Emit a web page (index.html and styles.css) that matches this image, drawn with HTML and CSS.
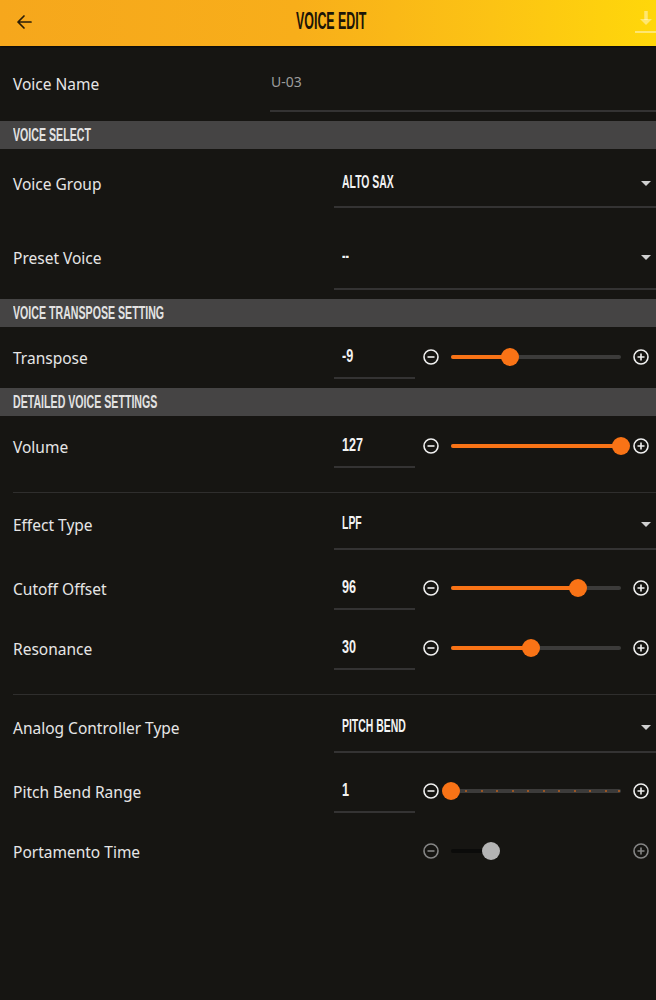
FILE: index.html
```html
<!DOCTYPE html>
<html>
<head>
<meta charset="utf-8">
<link rel="stylesheet" href="styles.css">
</head>
<body>
<header class="appbar">
  <div class="back">
    <svg width="16" height="16" viewBox="0 0 16 16"><path d="M15 8H2M8 2L2 8l6 6" fill="none" stroke="#2a1e08" stroke-width="1.7" stroke-linecap="round" stroke-linejoin="round"/></svg>
  </div>
  <h1 class="title"><span class="cond">VOICE EDIT</span></h1>
  <div class="dl">
    <svg width="22" height="23" viewBox="0 0 22 23"><path d="M11 0v9" stroke="rgba(255,255,255,0.42)" stroke-width="3.5"/><path d="M5 8h12l-6 6z" fill="rgba(255,255,255,0.42)"/><path d="M0 21h22" stroke="rgba(255,255,255,0.42)" stroke-width="2"/></svg>
  </div>
</header>

<main>
  <div class="row row-name">
    <div class="label">Voice Name</div>
    <div class="field field-name">U-03</div>
  </div>

  <div class="section"><span class="cond">VOICE SELECT</span></div>

  <div class="row row-vg">
    <div class="label">Voice Group</div>
    <div class="field field-select"><span class="cond">ALTO SAX</span><span class="caret"></span></div>
  </div>
  <div class="row row-pv">
    <div class="label">Preset Voice</div>
    <div class="field field-select"><span class="cond">--</span><span class="caret"></span></div>
  </div>

  <div class="section"><span class="cond">VOICE TRANSPOSE SETTING</span></div>

  <div class="row row-slider">
    <div class="label">Transpose</div>
    <div class="field field-num"><span class="cond num">-9</span></div>
    <div class="slider">
      <svg class="pm" width="16" height="16" viewBox="0 0 16 16"><circle cx="8" cy="8" r="7" fill="none" stroke="currentColor" stroke-width="1.6"/><path d="M4.5 8h7" stroke="currentColor" stroke-width="1.6"/></svg>
      <div class="track"><div class="fill" style="width:34.7%"></div><div class="thumb" style="left:34.7%"></div></div>
      <svg class="pm" width="16" height="16" viewBox="0 0 16 16"><circle cx="8" cy="8" r="7" fill="none" stroke="currentColor" stroke-width="1.6"/><path d="M4.5 8h7M8 4.5v7" stroke="currentColor" stroke-width="1.6"/></svg>
    </div>
  </div>

  <div class="section"><span class="cond">DETAILED VOICE SETTINGS</span></div>

  <div class="row row-slider">
    <div class="label">Volume</div>
    <div class="field field-num"><span class="cond num">127</span></div>
    <div class="slider">
      <svg class="pm" width="16" height="16" viewBox="0 0 16 16"><circle cx="8" cy="8" r="7" fill="none" stroke="currentColor" stroke-width="1.6"/><path d="M4.5 8h7" stroke="currentColor" stroke-width="1.6"/></svg>
      <div class="track"><div class="fill" style="width:100%"></div><div class="thumb" style="left:100%"></div></div>
      <svg class="pm" width="16" height="16" viewBox="0 0 16 16"><circle cx="8" cy="8" r="7" fill="none" stroke="currentColor" stroke-width="1.6"/><path d="M4.5 8h7M8 4.5v7" stroke="currentColor" stroke-width="1.6"/></svg>
    </div>
  </div>

  <div class="divider"></div>

  <div class="row row-select row-effect">
    <div class="label">Effect Type</div>
    <div class="field field-select"><span class="cond">LPF</span><span class="caret"></span></div>
  </div>
  <div class="row row-slider row-tight">
    <div class="label">Cutoff Offset</div>
    <div class="field field-num"><span class="cond num">96</span></div>
    <div class="slider">
      <svg class="pm" width="16" height="16" viewBox="0 0 16 16"><circle cx="8" cy="8" r="7" fill="none" stroke="currentColor" stroke-width="1.6"/><path d="M4.5 8h7" stroke="currentColor" stroke-width="1.6"/></svg>
      <div class="track"><div class="fill" style="width:74.7%"></div><div class="thumb" style="left:74.7%"></div></div>
      <svg class="pm" width="16" height="16" viewBox="0 0 16 16"><circle cx="8" cy="8" r="7" fill="none" stroke="currentColor" stroke-width="1.6"/><path d="M4.5 8h7M8 4.5v7" stroke="currentColor" stroke-width="1.6"/></svg>
    </div>
  </div>
  <div class="row row-slider">
    <div class="label">Resonance</div>
    <div class="field field-num"><span class="cond num">30</span></div>
    <div class="slider">
      <svg class="pm" width="16" height="16" viewBox="0 0 16 16"><circle cx="8" cy="8" r="7" fill="none" stroke="currentColor" stroke-width="1.6"/><path d="M4.5 8h7" stroke="currentColor" stroke-width="1.6"/></svg>
      <div class="track"><div class="fill" style="width:47%"></div><div class="thumb" style="left:47%"></div></div>
      <svg class="pm" width="16" height="16" viewBox="0 0 16 16"><circle cx="8" cy="8" r="7" fill="none" stroke="currentColor" stroke-width="1.6"/><path d="M4.5 8h7M8 4.5v7" stroke="currentColor" stroke-width="1.6"/></svg>
    </div>
  </div>

  <div class="divider"></div>

  <div class="row row-select row-analog">
    <div class="label">Analog Controller Type</div>
    <div class="field field-select"><span class="cond">PITCH BEND</span><span class="caret"></span></div>
  </div>
  <div class="row row-slider row-tight">
    <div class="label">Pitch Bend Range</div>
    <div class="field field-num"><span class="cond num">1</span></div>
    <div class="slider">
      <svg class="pm" width="16" height="16" viewBox="0 0 16 16"><circle cx="8" cy="8" r="7" fill="none" stroke="currentColor" stroke-width="1.6"/><path d="M4.5 8h7" stroke="currentColor" stroke-width="1.6"/></svg>
      <div class="track">
        <span class="tick" style="left:9.09%"></span><span class="tick" style="left:18.18%"></span><span class="tick" style="left:27.27%"></span><span class="tick" style="left:36.36%"></span><span class="tick" style="left:45.45%"></span><span class="tick" style="left:54.55%"></span><span class="tick" style="left:63.64%"></span><span class="tick" style="left:72.73%"></span><span class="tick" style="left:81.82%"></span><span class="tick" style="left:90.91%"></span><span class="tick" style="left:99%"></span>
        <div class="thumb" style="left:0%"></div>
      </div>
      <svg class="pm" width="16" height="16" viewBox="0 0 16 16"><circle cx="8" cy="8" r="7" fill="none" stroke="currentColor" stroke-width="1.6"/><path d="M4.5 8h7M8 4.5v7" stroke="currentColor" stroke-width="1.6"/></svg>
    </div>
  </div>
  <div class="row row-slider">
    <div class="label">Portamento Time</div>
    <div class="field field-empty"></div>
    <div class="slider disabled">
      <svg class="pm" width="16" height="16" viewBox="0 0 16 16"><circle cx="8" cy="8" r="7" fill="none" stroke="currentColor" stroke-width="1.6"/><path d="M4.5 8h7" stroke="currentColor" stroke-width="1.6"/></svg>
      <div class="track"><div class="fill" style="width:23.5%"></div><div class="thumb" style="left:23.5%"></div></div>
      <svg class="pm" width="16" height="16" viewBox="0 0 16 16"><circle cx="8" cy="8" r="7" fill="none" stroke="currentColor" stroke-width="1.6"/><path d="M4.5 8h7M8 4.5v7" stroke="currentColor" stroke-width="1.6"/></svg>
    </div>
  </div>
</main>
</body>
</html>
```

FILE: styles.css
```css
* { box-sizing: content-box; }
html, body { margin: 0; padding: 0; }
body {
  width: 656px;
  min-height: 1000px;
  background: #161512;
  color: #e4e4e4;
  font-family: "Noto Sans", "Liberation Sans", sans-serif;
  overflow-x: hidden;
}

.appbar {
  height: 46px;
  display: flex;
  align-items: center;
  position: relative;
  background: linear-gradient(90deg, #f6a71c 0%, #f8ae1a 45%, #fcc314 75%, #ffd70a 100%);
  box-shadow: 0 1px 2px rgba(0,0,0,0.6);
}
.back {
  width: 16px;
  height: 16px;
  margin-left: 16px;
  margin-top: -3px;
}
.back svg { display: block; }
.title {
  flex: 1;
  margin: 0;
  text-align: center;
  font-size: 23px;
  line-height: 28px;
  color: #1c1507;
  margin-top: -5px;
  margin-right: 4px;
}
.title .cond {
  transform: scaleX(0.54);
  transform-origin: center center;
  font-size: 23px;
}
.dl {
  width: 22px;
  height: 23px;
  margin-right: -1px;
  margin-top: -2px;
}
.dl svg { display: block; }

.cond {
  display: inline-block;
  font-family: "Liberation Sans", Arial, sans-serif;
  font-weight: bold;
  font-size: 18px;
  white-space: nowrap;
  transform: scaleX(0.58);
  transform-origin: left center;
}
.cond.num { transform: scaleX(0.7); }

.section {
  height: 28px;
  background: #454444;
  padding-left: 13px;
  display: flex;
  align-items: center;
  color: #e2e2e2;
}
.section .cond { transform: scaleX(0.59); line-height: 20px; }

.row {
  display: flex;
  align-items: flex-start;
  padding-left: 13px;
}
.label {
  flex: none;
  width: 321px;
  font-size: 15.5px;
  line-height: 22px;
  color: #e6e6e6;
}
.field {
  flex: 1;
  min-width: 0;
  padding-left: 8px;
  line-height: 22px;
  height: 22px;
  border-bottom: 2px solid #343333;
  color: #f2f2f2;
  display: flex;
  align-items: center;
  justify-content: space-between;
}
.field .cond { line-height: 22px; }

.caret {
  width: 0;
  height: 0;
  border-left: 5px solid transparent;
  border-right: 5px solid transparent;
  border-top: 5px solid #cfcfcf;
  margin-right: 5px;
  margin-top: 2px;
}

/* Voice Name */
.row-name { height: 75px; }
.row-name .label { width: 257px; padding-top: 27px; }
.field-name {
  padding-left: 1px;
  padding-top: 25px;
  padding-bottom: 17px;
  font-size: 14px;
  color: #9c9c9c;
}

/* Voice group / preset */
.row-vg { height: 74px; }
.row-vg .label { padding-top: 24px; }
.row-vg .field { padding-top: 22px; padding-bottom: 13px; }
.row-pv { height: 76px; }
.row-pv .label { padding-top: 24px; }
.row-pv .field { padding-top: 22px; padding-bottom: 21px; }

/* select rows */
.row-select { height: 64px; }
.row-select .label { padding-top: 21px; }
.row-select .field { padding-top: 19px; padding-bottom: 14px; }
.row-effect { height: 65px; }
.row-analog { height: 66px; }
.row-analog .label { padding-top: 22px; }
.row-analog .field { padding-top: 20px; padding-bottom: 14px; }

/* slider rows */
.row-slider { height: 61px; }
.row-slider.row-tight { height: 60px; }
.row-slider .label { padding-top: 20px; }
.field-num {
  flex: none;
  width: 73px;
  padding-top: 18px;
  padding-bottom: 10px;
}
.field-empty {
  flex: none;
  width: 73px;
  border-bottom-color: transparent;
}

.slider {
  display: flex;
  align-items: center;
  gap: 12px;
  height: 20px;
  margin-top: 20px;
  margin-left: 8px;
  color: #f0f0f0;
}
.pm { display: block; flex: none; }
.track {
  position: relative;
  width: 170px;
  height: 4px;
  border-radius: 2px;
  background: #3c3b3a;
}
.fill {
  height: 100%;
  border-radius: 2px;
  background: #f97316;
}
.thumb {
  position: absolute;
  top: 50%;
  width: 18px;
  height: 18px;
  margin: -9px 0 0 -9px;
  border-radius: 50%;
  background: #f97316;
}
.tick {
  position: absolute;
  top: 1px;
  width: 2px;
  height: 2px;
  margin-left: -1px;
  border-radius: 1px;
  background: #b8601f;
}

.slider.disabled { color: #858585; }
.slider.disabled .track { background: transparent; }
.slider.disabled .fill { background: #0b0b0a; }
.slider.disabled .thumb { background: #b4b4b4; }

.divider {
  height: 1px;
  background: #2f2e2d;
  margin: 15px 0 0 13px;
}
```
